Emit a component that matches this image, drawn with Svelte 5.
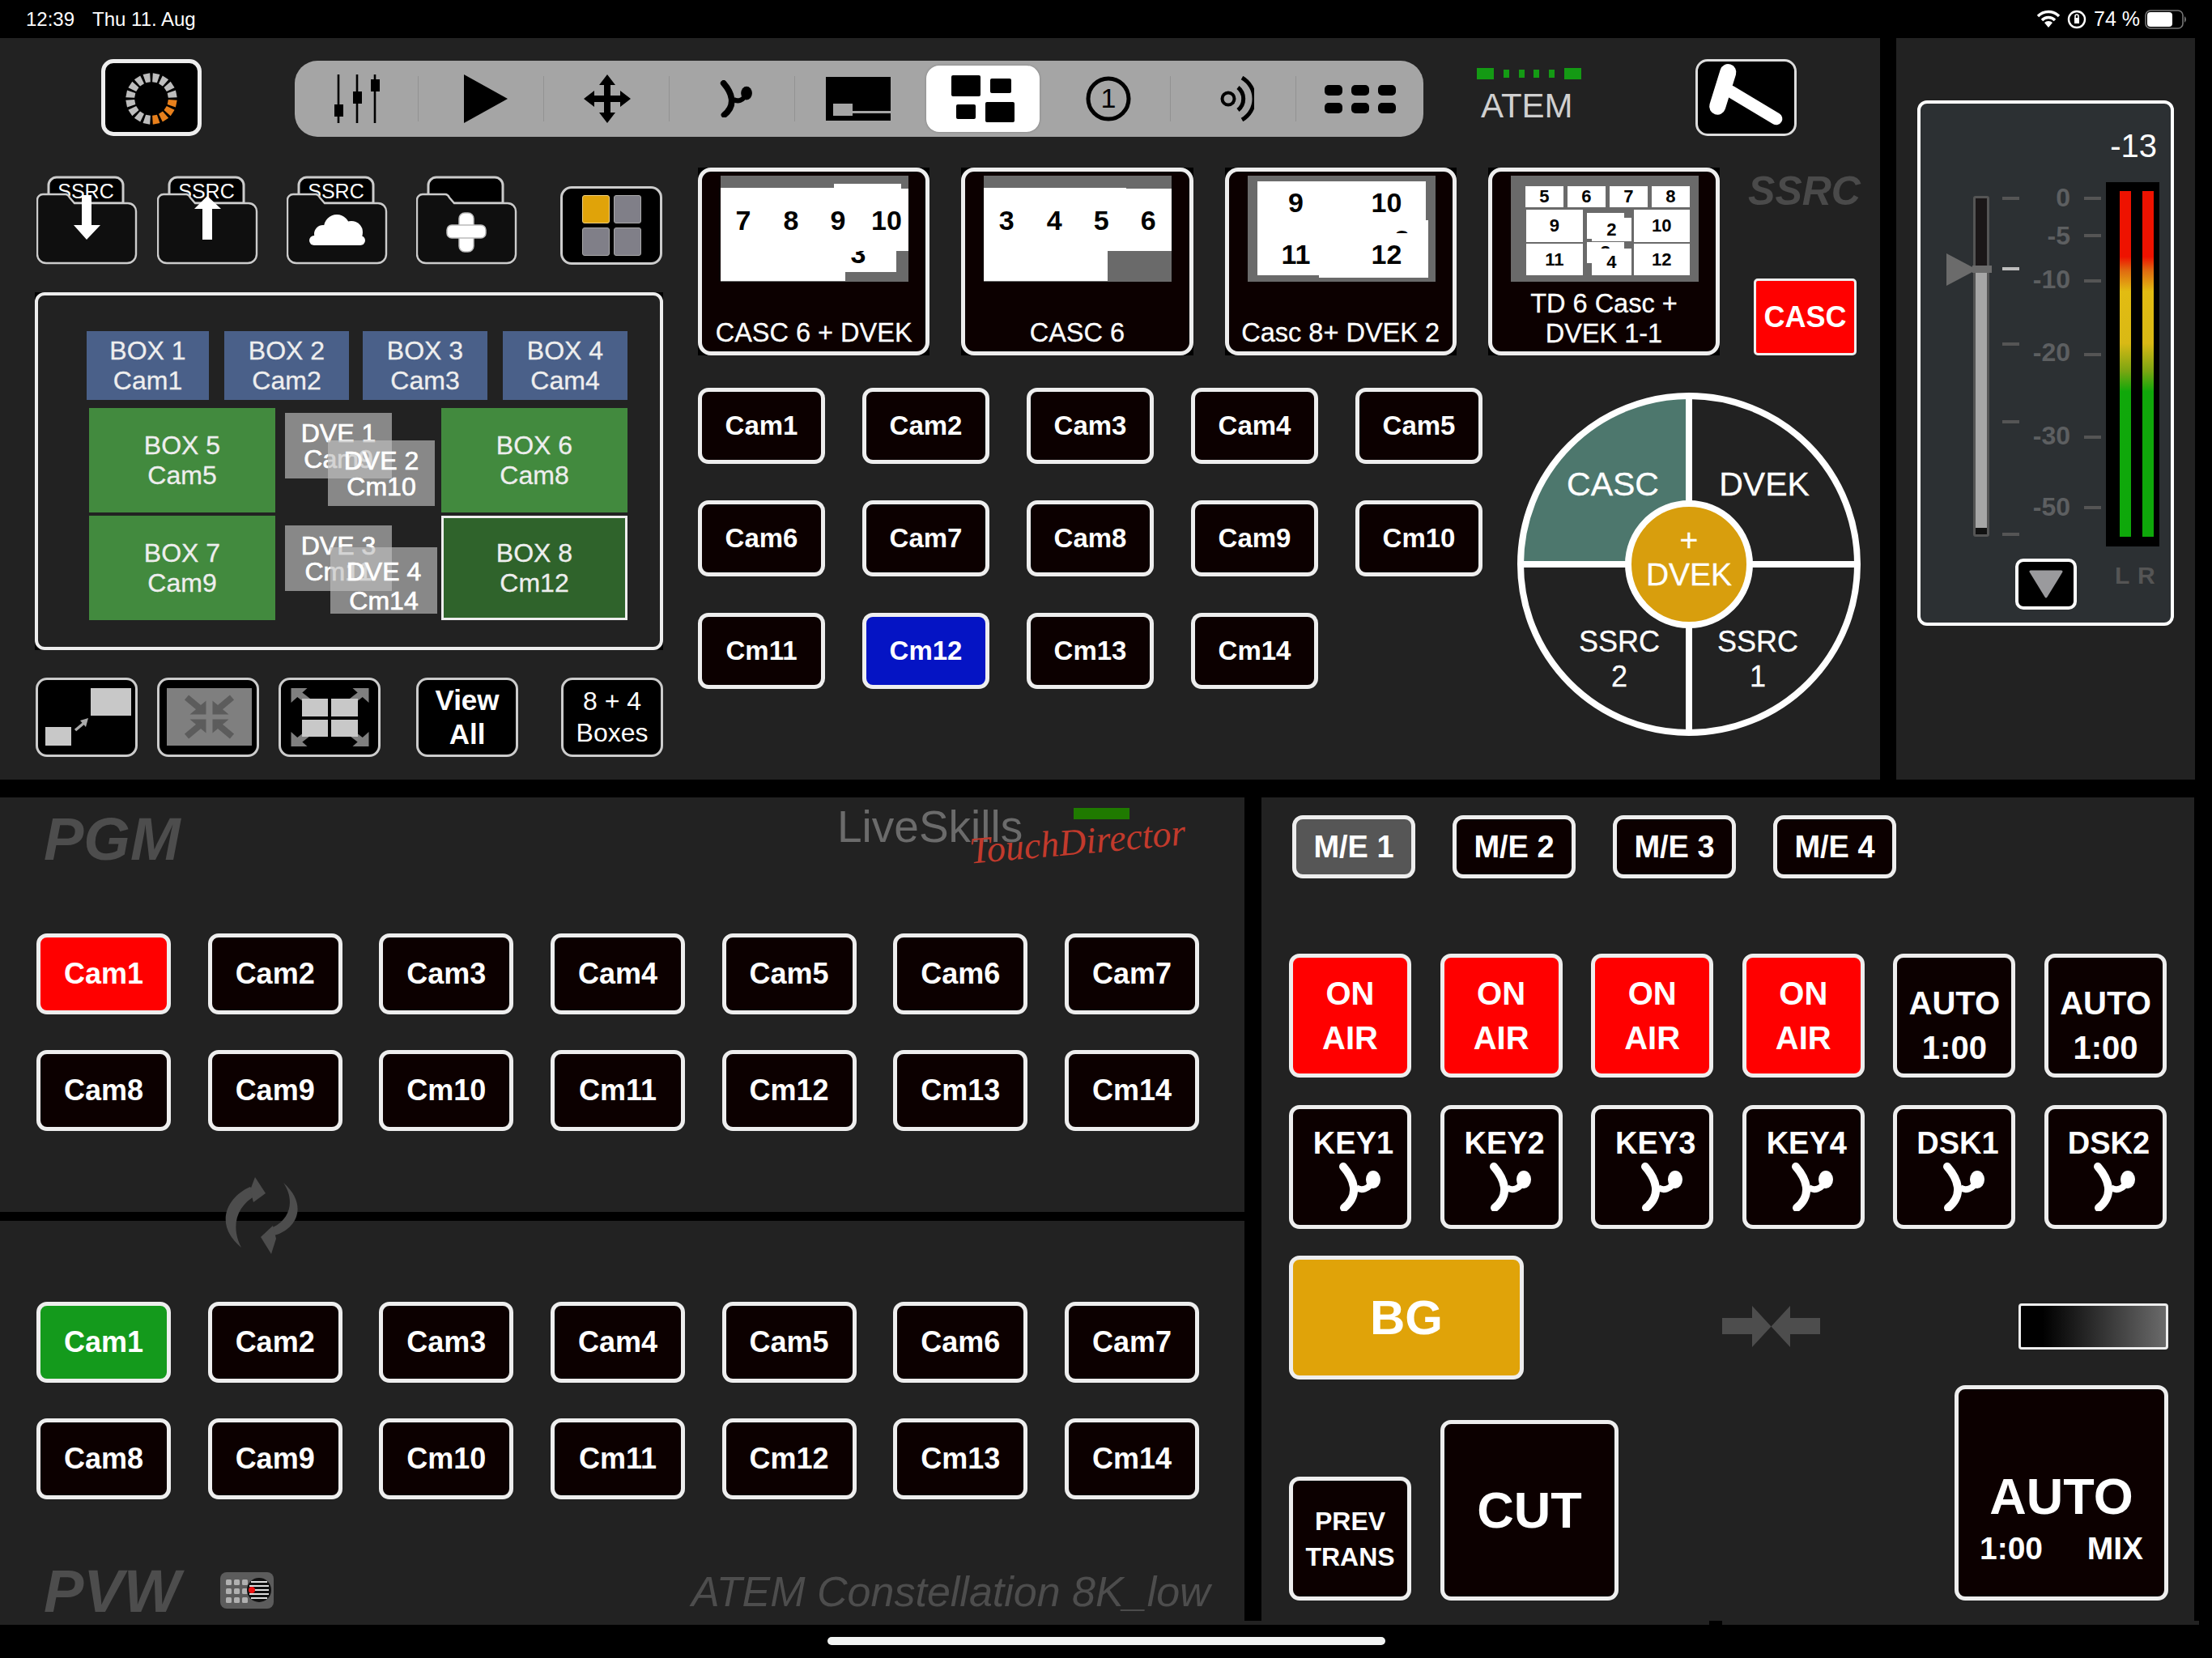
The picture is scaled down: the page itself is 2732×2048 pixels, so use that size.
<script>
  const ring = Array.from({ length: 16 }, (_, i) => 11.25 + i * 22.5);
  const row1 = ['Cam1','Cam2','Cam3','Cam4','Cam5','Cam6','Cam7','Cam8','Cam9','Cm10','Cm11','Cm12','Cm13','Cm14'];
  const rect = (x, y, w, h, t = '', fs = 34) => ({ x, y, w, h, t, fs, white: true });
  const num = (cx, cy, t, fs = 34) => ({ x: cx - 30, y: cy - 30, w: 60, h: 60, t, fs, white: false });
  const thumbs = [
    { label: ['CASC 6 + DVEK'], items: [rect(0,15,154,115), rect(140,10,83,6), rect(154,93,63,26),
      num(170,96,'3',34), rect(154,16,78,77), num(28,55,'7'), num(87,55,'8'), num(145,55,'9'), num(205,55,'10')] },
    { label: ['CASC 6'], items: [rect(0,15,153,115), rect(153,15,23,78), rect(176,16,56,77),
      num(28,55,'3'), num(87,55,'4'), num(145,55,'5'), num(203,55,'6')] },
    { label: ['Casc 8+ DVEK 2'], items: [rect(12,7,208,116), rect(220,55,3,16), num(191,79,'3',34), rect(88,71,135,55),
      num(60,33,'9'), num(172,33,'10'), num(60,97,'11'), num(172,97,'12')] },
    { label: ['TD 6 Casc +','DVEK 1-1'], items: [
      rect(18,13,47,26,'5',22), rect(70,13,47,26,'6',22), rect(122,13,47,26,'7',22), rect(174,13,47,26,'8',22),
      rect(19,42,70,40,'9',22), rect(152,42,69,40,'10',22), rect(19,84,70,39,'11',22), rect(152,84,69,39,'12',22),
      rect(94,46,46,32,'1',22), rect(100,52,49,29,'2',22), rect(94,82,46,26,'3',22), rect(100,90,49,33,'4',22)] }
  ];
  const boxes = [
    { x:107,y:409,w:151,h:85,a:'BOX 1',b:'Cam1',c:'blue' }, { x:277,y:409,w:154,h:85,a:'BOX 2',b:'Cam2',c:'blue' },
    { x:448,y:409,w:154,h:85,a:'BOX 3',b:'Cam3',c:'blue' }, { x:621,y:409,w:154,h:85,a:'BOX 4',b:'Cam4',c:'blue' },
    { x:110,y:504,w:230,h:129,a:'BOX 5',b:'Cam5',c:'green' }, { x:545,y:504,w:230,h:129,a:'BOX 6',b:'Cam8',c:'green' },
    { x:110,y:637,w:230,h:129,a:'BOX 7',b:'Cam9',c:'green' }, { x:545,y:637,w:230,h:129,a:'BOX 8',b:'Cm12',c:'dark' },
    { x:352,y:510,w:132,h:81,a:'DVE 1',b:'Cam9',c:'dve' }, { x:405,y:544,w:132,h:81,a:'DVE 2',b:'Cm10',c:'dve' },
    { x:352,y:649,w:132,h:81,a:'DVE 3',b:'Cm11',c:'dve' }, { x:408,y:676,w:132,h:82,a:'DVE 4',b:'Cm14',c:'dve tall4' }
  ];
  const scale = [['0',244],['-5',291],['-10',345],['-20',435],['-30',538],['-50',626]];
  const rticks = [245,291,347,438,540,627];
  const lticks = [[245,0],[332,1],[425,0],[521,0],[660,0]];
  const corners = [[1,1],[-1,1],[1,-1],[-1,-1]];
  const keys = ['KEY1','KEY2','KEY3','KEY4','DSK1','DSK2'];
  const six = [1,2,3,4,5,6];
</script>

<div class="screen">
  <div class="status">
    <span class="time">12:39</span><span class="date">Thu 11. Aug</span>
    <span class="spring"></span>
    <svg class="wifi" width="32" height="24" viewBox="0 0 32 24">
      <path d="M3 8 A18 18 0 0 1 29 8" fill="none" stroke="#fff" stroke-width="3.4"/>
      <path d="M8 13 A11 11 0 0 1 24 13" fill="none" stroke="#fff" stroke-width="3.4"/>
      <path d="M16 22 L11 16 A7 7 0 0 1 21 16 Z" fill="#fff"/>
    </svg>
    <svg class="lock" width="24" height="24" viewBox="0 0 24 24">
      <circle cx="12" cy="12" r="10" fill="none" stroke="#fff" stroke-width="2.4"/>
      <rect x="9" y="10" width="6" height="7" fill="#fff"/>
      <path d="M10 10 V8 A2 2 0 0 1 14 8 V10" fill="none" stroke="#fff" stroke-width="1.6"/>
    </svg>
    <span class="pct">74 %</span>
    <svg class="batt" width="52" height="24" viewBox="0 0 52 24">
      <rect x="1" y="1" width="46" height="22" rx="6" fill="none" stroke="#777" stroke-width="1.6"/>
      <rect x="3" y="3" width="31" height="18" rx="4" fill="#fff"/>
      <path d="M49 8 A5 5 0 0 1 49 16 Z" fill="#777"/>
    </svg>
  </div>

  <div class="top">
    <section class="control">
      <header class="head">
        <div class="logoBtn">
          <svg width="116" height="88" viewBox="0 0 116 88">
            {#each ring as a}
              <polygon points="53.500,13 62.500,13 61,24 55,24" transform="rotate({a} 58 45)" fill={a >= 100 && a <= 170 ? '#e8801c' : '#bdbdbd'}/>
            {/each}
          </svg>
        </div>
        <nav class="toolbar">
          <div class="cell sep">
            <svg width="60" height="62" viewBox="0 0 60 62">
              <path d="M7 1 V61 M30 1 V61 M52 1 V61" stroke="#000" stroke-width="2.6"/>
              <rect x="2" y="38" width="11" height="15" fill="#000"/>
              <rect x="25" y="22" width="11" height="15" fill="#000"/>
              <rect x="47" y="7" width="11" height="15" fill="#000"/>
            </svg>
          </div>
          <div class="cell sep">
            <svg class="nudgeP" width="54" height="60" viewBox="0 0 54 60"><polygon points="0,0 54,30 0,60" fill="#000"/></svg>
          </div>
          <div class="cell sep">
            <svg width="58" height="60" viewBox="0 0 58 60">
              <path d="M29 0 L39 13 H33 V26 H45 V20 L58 30 L45 40 V34 H33 V47 H39 L29 60 L19 47 H25 V34 H13 V40 L0 30 L13 20 V26 H25 V13 H19 Z" fill="#000"/>
            </svg>
          </div>
          <div class="cell sep">
            <svg class="nudgeR" width="46" height="46" viewBox="0 0 52 60">
              <path d="M6 5 C19 20 27 40 7 56" fill="none" stroke="#000" stroke-width="10" stroke-linecap="round"/>
              <path d="M22 31 C28 35 38 34 42 22" fill="none" stroke="#000" stroke-width="8"/>
              <ellipse cx="43" cy="21" rx="9" ry="11" fill="#000"/>
            </svg>
          </div>
          <div class="cell">
            <svg width="80" height="54" viewBox="0 0 80 54">
              <rect x="0" y="0" width="80" height="54" fill="#000"/>
              <rect x="9" y="33" width="24" height="15" fill="#a5a5a5"/>
              <rect x="33" y="42" width="47" height="3" fill="#a5a5a5"/>
            </svg>
          </div>
          <div class="cell"><div class="selected">
            <svg width="78" height="58" viewBox="0 0 78 58">
              <rect x="0" y="0" width="36" height="26" rx="2" fill="#000"/>
              <rect x="48" y="4" width="26" height="18" rx="2" fill="#000"/>
              <rect x="6" y="36" width="24" height="18" rx="2" fill="#000"/>
              <rect x="42" y="33" width="36" height="25" rx="2" fill="#000"/>
            </svg>
          </div></div>
          <div class="cell sep">
            <svg width="56" height="56" viewBox="0 0 56 56">
              <circle cx="28" cy="28" r="25" fill="none" stroke="#000" stroke-width="5"/>
              <text x="28" y="39" class="one">1</text>
            </svg>
          </div>
          <div class="cell sep">
            <svg class="nudgeR" width="42" height="56" viewBox="0 0 42 56">
              <circle cx="10" cy="28" r="7.500" fill="none" stroke="#000" stroke-width="4"/>
              <path d="M22 14 A18 18 0 0 1 22 42" fill="none" stroke="#000" stroke-width="5"/>
              <path d="M27 2 A30 30 0 0 1 27 54" fill="none" stroke="#000" stroke-width="5"/>
            </svg>
          </div>
          <div class="cell dots">
            {#each six as d}<i data-d={d}></i>{/each}
          </div>
        </nav>
        <div class="atem">
          <div class="leds"><b></b><i></i><i></i><i></i><i></i><b></b></div>
          <div class="atemText">ATEM</div>
        </div>
        <div class="hammer">
          <svg width="119" height="89" viewBox="0 0 118 88">
            <path d="M41 37 L96 70" stroke="#fff" stroke-width="15" stroke-linecap="round"/>
            <path d="M37 13 L24 55" stroke="#fff" stroke-width="20" stroke-linecap="round"/>
          </svg>
        </div>
      </header>

      <div class="main">
        <div class="leftCol">
          <div class="iconRow">
            {#each ['down','up','cloud','plus'] as kind, i}
              <svg class="folder f{i}" width="125" height="110" viewBox="0 0 125 110">
                <path d="M15 34 V12 A10 10 0 0 1 25 2 H97 A10 10 0 0 1 107 12 V34 Z" fill="#000" stroke="#ccc" stroke-width="3"/>
                {#if kind !== 'plus'}<text x="61" y="28" class="ftext">SSRC</text>{/if}
                <path d="M1 30 A7 7 0 0 1 8 23 H36 Q39 23 41 27 L47 34 H113 A10 10 0 0 1 123 44 V97 A11 11 0 0 1 112 108 H12 A11 11 0 0 1 1 97 Z" fill="#0f0f0f" stroke="#ccc" stroke-width="2.400"/>
                {#if kind === 'down'}
                  <path d="M56 24 H68 V61 H79 L62 79 L46 61 H56 Z" fill="#fff"/>
                {:else if kind === 'up'}
                  <path d="M62 25 L79 41 H68 V79 H56 V41 H46 Z" fill="#fff"/>
                {:else if kind === 'cloud'}
                  <g fill="#fff"><circle cx="62" cy="64" r="16"/><circle cx="45" cy="72" r="11"/><circle cx="80" cy="70" r="14"/><rect x="28" y="74" width="69" height="12" rx="6"/><rect x="38" y="64" width="48" height="16"/></g>
                {:else}
                  <g fill="#fff" stroke="#bbb" stroke-width="1.500"><rect x="53" y="46" width="18" height="48" rx="7"/><rect x="38" y="61" width="48" height="16" rx="6"/></g>
                  <rect x="54" y="62" width="16" height="14" fill="#fff"/>
                {/if}
              </svg>
            {/each}
            <div class="gridBtn"><i class="on"></i><i></i><i></i><i></i></div>
          </div>

          <div class="boxWrap"><div class="boxFrame"><div class="boxCanvas">
            {#each boxes as b}
              <div class="box {b.c}" style="left:{b.x-47}px;top:{b.y-365}px;width:{b.w}px;height:{b.h}px"><span>{b.a}</span><span>{b.b}</span></div>
            {/each}
          </div></div></div>

          <div class="toolRow">
            <div class="tool">
              <svg width="125" height="98" viewBox="0 0 125 98">
                <rect x="11" y="61" width="32" height="23" fill="#c8c8c8"/>
                <rect x="67" y="13" width="50" height="34" fill="#c8c8c8"/>
                <path d="M48 65 L60 55" stroke="#aaa" stroke-width="3.500"/><path d="M64 50 L54 53 L61 61 Z" fill="#aaa"/>
              </svg>
            </div>
            <div class="tool">
              <svg width="125" height="98" viewBox="0 0 125 98">
                <rect x="11" y="13" width="105" height="71" fill="#7f7f7f"/>
                {#each corners as [sx, sy]}
                  <g transform="translate(63.500 48.500) scale({sx} {sy})" fill="#5c5c5c">
                    <polygon points="4,3 4,20 24,3"/><path d="M10 9 L28 24" stroke="#5c5c5c" stroke-width="8"/>
                  </g>
                {/each}
              </svg>
            </div>
            <div class="tool">
              <svg width="125" height="98" viewBox="0 0 125 98">
                {#each corners as [sx, sy]}
                  <g transform="translate(62.500 49) scale({sx} {sy})" fill="#7f7f7f">
                    <polygon points="48,36 48,18 28,36"/><path d="M44 33 L22 16" stroke="#7f7f7f" stroke-width="8"/>
                  </g>
                {/each}
                <g fill="#c8c8c8">
                  <rect x="28" y="26" width="32" height="22"/><rect x="64" y="26" width="33" height="22"/>
                  <rect x="28" y="52" width="32" height="21"/><rect x="64" y="52" width="33" height="21"/>
                </g>
              </svg>
            </div>
            <div class="tool big view">View<br/>All</div>
            <div class="tool reg">8 + 4<br/>Boxes</div>
          </div>
        </div>

        <div class="rightArea">
          <div class="thumbRow">
            {#each thumbs as t}
              <div class="thumb"><div class="tface">
                <div class="img">
                  {#each t.items as it}
                    <div class="it" class:white={it.white} style="left:{it.x}px;top:{it.y}px;width:{it.w}px;height:{it.h}px;font-size:{it.fs}px">{it.t}</div>
                  {/each}
                </div>
                <div class="tlabel" class:two={t.label.length > 1}>{#each t.label as l}<div>{l}</div>{/each}</div>
              </div></div>
            {/each}
            <div class="ssrcCol">
              <div class="ssrcLabel">SSRC</div>
              <div class="cascBtn">CASC</div>
            </div>
          </div>
          <div class="lower">
            <div class="camGrid">
              {#each row1 as c}
                <div class="btn" class:blue={c === 'Cm12'}>{c}</div>
              {/each}
            </div>
            <svg class="dial" width="432" height="432" viewBox="0 0 432 432">
              <circle cx="216" cy="216" r="208" fill="#222"/>
              <path d="M216 216 V8 A208 208 0 0 0 8 216 Z" fill="#4d776d"/>
              <circle cx="216" cy="216" r="208" fill="none" stroke="#fff" stroke-width="8"/>
              <path d="M216 8 V424 M8 216 H424" stroke="#fff" stroke-width="8"/>
              <circle cx="216" cy="216" r="75" fill="#d89e0d" stroke="#fff" stroke-width="8"/>
              <text x="122" y="131" class="d41">CASC</text>
              <text x="309" y="131" class="d41">DVEK</text>
              <text x="216" y="199" class="d38">+</text>
              <text x="216" y="242" class="d38">DVEK</text>
              <text x="130" y="324" class="d36">SSRC</text>
              <text x="130" y="367" class="d36">2</text>
              <text x="301" y="324" class="d36">SSRC</text>
              <text x="301" y="367" class="d36">1</text>
            </svg>
          </div>
        </div>
      </div>
    </section>

    <section class="faderPanel">
      <div class="card">
        <div class="val">-13</div>
        {#each lticks as [y, on]}
          <i class="tick l" class:on={on} style="top:{y-130}px"></i>
        {/each}
        {#each rticks as y}
          <i class="tick r" style="top:{y-130}px"></i>
        {/each}
        {#each scale as [t, y]}
          <span class="sc" style="top:{y-128}px">{t}</span>
        {/each}
        <div class="track"><div class="dark"></div><div class="lite"></div></div>
        <svg class="knob" width="58" height="40" viewBox="0 0 58 40">
          <polygon points="0,0 34,18 34,22 0,40" fill="#6b6b6b"/>
          <rect x="32" y="15" width="24" height="9" fill="#6b6b6b"/>
        </svg>
        <div class="meter"><div class="bar"></div><div class="bar"></div></div>
        <div class="lr">L R</div>
        <div class="downBtn">
          <svg width="44" height="36" viewBox="0 0 44 36"><polygon points="3,2 41,2 22,33" fill="#9a9a9d" stroke="#9a9a9d" stroke-width="3" stroke-linejoin="round"/></svg>
        </div>
      </div>
    </section>
  </div>

  <div class="bottom">
    <div class="leftStack">
      <section class="pgm">
        <div class="pHead">
          <div class="bigLabel">PGM</div>
          <div class="live">LiveSkills</div>
          <div class="greenBar"></div>
          <div class="touch">TouchDirector</div>
        </div>
        <div class="camRows">
          {#each row1 as c, i}<div class="btn w" class:red={i === 0}>{c}</div>{/each}
        </div>
      </section>
      <section class="pvw">
        <div class="camRows">
          {#each row1 as c, i}<div class="btn w" class:grn={i === 0}>{c}</div>{/each}
        </div>
        <div class="pFoot">
          <div class="bigLabel pv">PVW</div>
          <svg class="padIcon" width="66" height="45" viewBox="0 0 66 45">
            <rect width="66" height="45" rx="8" fill="#5c5c5c"/>
            <g fill="#b0b0b0">
              {#each [7,17,27] as x}{#each [9,20,31] as y}<rect x={x} y={y} width="7" height="7" rx="1.500"/>{/each}{/each}
            </g>
            <circle cx="48" cy="22" r="15" fill="#111"/>
            <path d="M38 12 H58 M36 17 H60 M36 22 H60 M36 27 H60 M38 32 H58" stroke="#ddd" stroke-width="2"/>
            <circle cx="39" cy="22" r="4" fill="#e11"/>
          </svg>
          <div class="constel">ATEM Constellation 8K_low</div>
        </div>
      </section>
      <svg class="recycle" width="94" height="96" viewBox="0 0 94 96">
        <g fill="#4d4d4d">
          <path d="M32 12 C4 24 -14 58 21 87 C8 62 14 36 40 22 Z"/>
          <polygon points="38,0 51,20 36,31 32,16"/>
          <path d="M73 7 C86 26 84 50 60 62 L62 72 C90 64 104 34 73 7 Z"/>
          <polygon points="58,95 45,74 60,60 64,76"/>
        </g>
      </svg>
    </div>

    <section class="mix">
      <div class="meRow">
        <div class="btn me active">M/E 1</div><div class="btn me">M/E 2</div><div class="btn me">M/E 3</div><div class="btn me">M/E 4</div>
      </div>
      <div class="keyGrid">
        {#each [1,2,3,4] as _}<div class="btn tall red"><span>ON</span><span>AIR</span></div>{/each}
        {#each [1,2] as _}<div class="btn tall auto"><span>AUTO</span><span>1:00</span></div>{/each}
        {#each keys as k}
          <div class="btn key">
            <span class="klabel">{k}</span>
            <svg class="kicon" width="52" height="60" viewBox="0 0 52 60">
              <path d="M6 5 C19 20 27 40 7 56" fill="none" stroke="#fff" stroke-width="10" stroke-linecap="round"/>
              <path d="M22 31 C28 35 38 34 42 22" fill="none" stroke="#fff" stroke-width="8"/>
              <ellipse cx="43" cy="21" rx="9" ry="11" fill="#fff"/>
            </svg>
          </div>
        {/each}
      </div>
      <div class="trans">
        <div class="tLeft">
          <div class="btn bg">BG</div>
          <div class="tBtns">
            <div class="btn prev"><span>PREV</span><span>TRANS</span></div>
            <div class="btn cut">CUT</div>
          </div>
        </div>
        <svg class="pinch" width="121" height="51" viewBox="0 0 121 51">
          <path d="M0 15 H37 V0 L60.500 25.500 L37 51 V35 H0 Z" fill="#4d4d4d"/>
          <path d="M121 15 H84 V0 L60.500 25.500 L84 51 V35 H121 Z" fill="#4d4d4d"/>
        </svg>
        <div class="tRight">
          <div class="grad"></div>
          <div class="btn autoBig">
            <span class="autoT">AUTO</span>
            <div class="autoS"><span>1:00</span><span>MIX</span></div>
          </div>
        </div>
      </div>
    </section>
  </div>

  <div class="strip"><div class="notch"></div></div>
  <div class="homeWrap"><div class="home"></div></div>
</div>

<style>
  :global(body) { margin: 0; background: #000; }
  .screen { width: 2732px; height: 2048px; background: #000; overflow: hidden; position: relative; font-family: "Liberation Sans", Arial, sans-serif; color: #fff; box-sizing: border-box; }
  * { box-sizing: border-box; }

  .status { height: 47px; display: flex; align-items: center; padding: 0 31px 0 32px; font-size: 24px; color: #fff; }
  .date { margin-left: 22px; }
  .spring { flex: 1; }
  .wifi { margin-right: 7px; }
  .lock { margin-right: 9px; }
  .pct { margin-right: 6px; font-size: 25px; }

  .top { display: flex; height: 916px; gap: 20px; }
  .control { width: 2322px; background: #222; }
  .head { display: flex; align-items: flex-start; padding: 26px 0 0 125px; height: 160px; }
  .logoBtn, .hammer { width: 124px; height: 95px; background: #000; border: 5px solid #eee; border-radius: 15px; display: flex; align-items: center; justify-content: center; }
  .hammer { margin-left: 141px; width: 125px; border-width: 3px; border-color: #ddd; }
  .toolbar { margin: 2px 0 0 115px; width: 1394px; height: 94px; border-radius: 28px; background: #a5a5a5; display: grid; grid-template-columns: 153px 155px 155px 155px 155px 154px 155px 155px 157px; }
  .cell { position: relative; display: flex; align-items: center; justify-content: center; height: 94px; }
  .cell.sep::after { content: ""; position: absolute; right: 0; top: 19px; height: 56px; width: 1px; background: #929292; }
  .nudgeR { margin-left: 9px; }
  .nudgeP { margin-left: 11px; }
  .selected { width: 140px; height: 82px; border-radius: 16px; background: #fff; display: flex; align-items: center; justify-content: center; box-shadow: 0 0 3px rgba(0,0,0,.25); }
  .one { font-size: 34px; font-family: "Liberation Sans", sans-serif; text-anchor: middle; fill: #000; }
  .cell.dots { display: grid; grid-template-columns: repeat(3, 22px); grid-template-rows: repeat(2, 13px); gap: 9px 11px; align-content: center; justify-content: center; }
  .dots i { background: #000; border-radius: 5px; display: block; width: 22px; height: 13px; }
  .atem { margin-left: 66px; width: 129px; }
  .leds { display: flex; align-items: center; justify-content: space-between; margin-top: 11px; height: 14px; }
  .leds b { width: 21px; height: 14px; background: #149a14; }
  .leds i { width: 7px; height: 10px; background: #149a14; }
  .atemText { font-size: 42px; color: #d0d0d0; margin: 13px 0 0 5px; line-height: 40px; }

  .main { display: flex; padding: 0 0 0 43px; }
  .leftCol { width: 776px; padding-top: 10px; }
  .iconRow { display: flex; align-items: flex-end; height: 110px; margin-left: 2px; }
  .folder { display: block; }
  .f1 { margin-left: 24px; }
  .f2 { margin-left: 35px; }
  .f3 { margin-left: 35px; }
  .gridBtn { width: 126px; height: 97px; margin-left: 53px; background: #000; border: 3px solid #ccc; border-radius: 14px; display: grid; grid-template-columns: 34px 34px; grid-template-rows: 35px 35px; gap: 5px; justify-content: center; align-content: center; }
  .gridBtn i { background: #807f88; border: 1px solid #aaa; border-radius: 3px; }
  .gridBtn i.on { background: #e0a309; border-color: #f0d080; }
  .ftext { font-size: 25px; fill: #fff; text-anchor: middle; font-family: "Liberation Sans", sans-serif; }

  .boxWrap { margin-top: 34px; height: 442px; background: #000; }
  .boxFrame { height: 100%; border: 4px solid #eee; border-radius: 12px; background: #222; }
  .boxCanvas { position: relative; height: 100%; }
  .box { position: absolute; display: flex; flex-direction: column; align-items: center; justify-content: center; font-size: 32px; line-height: 37px; color: #eee; -webkit-text-stroke: 0.3px #eee; }
  .box.blue { background: #4a6089; }
  .box.green { background: #428a3e; }
  .box.dark { background: #2f632b; border: 3px solid #eee; }
  .box.dve { background: rgba(190,190,190,.66); color: #fff; line-height: 32px; -webkit-text-stroke: 0.7px #fff; }
  .box.tall4 { line-height: 36px; padding-top: 14px; }

  .toolRow { display: flex; margin: 34px 0 0 1px; gap: 24px; }
  .tool { width: 126px; height: 98px; background: #000; border: 3px solid #ccc; border-radius: 14px; display: flex; align-items: center; justify-content: center; text-align: center; }
  .tool svg { margin: -3px; flex: none; }
  .tool.view { margin-left: 20px; font-weight: 700; font-size: 35px; line-height: 42px; }
  .tool.reg { margin-left: 29px; font-size: 32px; line-height: 39px; }

  .rightArea { margin-left: 43px; width: 1436px; }
  .thumbRow { display: flex; gap: 39px; }
  .thumb { width: 287px; height: 232px; background: #000; }
  .tface { position: relative; height: 100%; background: #0c0000; border: 5px solid #eee; border-radius: 16px; }
  .img { position: absolute; left: 23px; top: 5px; width: 232px; height: 131px; background: #6a6a6a; overflow: hidden; }
  .it { position: absolute; display: flex; align-items: center; justify-content: center; font-weight: 700; color: #000; font-size: 34px; }
  .it.white { background: #fff; }
  .tlabel { position: absolute; left: -5px; right: -5px; bottom: 4px; text-align: center; font-size: 32.500px; line-height: 37px; color: #fff; white-space: nowrap; -webkit-text-stroke: 0.3px #fff; }
  .tlabel.two { bottom: 3px; }
  .ssrcCol { margin-left: -4px; width: 139px; display: flex; flex-direction: column; align-items: flex-end; }
  .ssrcLabel { font-weight: 700; font-style: italic; font-size: 50px; line-height: 48px; color: #4a4a4a; margin-top: 5px; }
  .cascBtn { margin-top: 84px; margin-right: 5px; width: 127px; height: 95px; background: #f00; border: 3px solid #eee; border-radius: 5px; display: flex; align-items: center; justify-content: center; font-weight: 700; font-size: 36px; }

  .lower { display: flex; margin-top: 40px; position: relative; align-items: flex-start; }
  .camGrid { display: grid; grid-template-columns: repeat(5, 157px); grid-auto-rows: 94px; column-gap: 46px; row-gap: 45px; }
  .btn { background: #0c0000; border: 5px solid #eee; border-radius: 13px; display: flex; align-items: center; justify-content: center; color: #fff; font-weight: 700; font-size: 33px; text-align: center; }
  .btn.blue { background: #0514c4; }
  .btn.red { background: #f00; }
  .btn.grn { background: #149a1c; }
  .dial { margin: 2px 0 0 39px; flex: none; }
  .d41 { font-size: 41px; fill: #fff; text-anchor: middle; font-family: "Liberation Sans", sans-serif; stroke: #fff; stroke-width: .3px; }
  .d38 { font-size: 39px; fill: #fff; text-anchor: middle; font-family: "Liberation Sans", sans-serif; stroke: #fff; stroke-width: .3px; }
  .d36 { font-size: 36px; fill: #fff; text-anchor: middle; font-family: "Liberation Sans", sans-serif; stroke: #fff; stroke-width: .3px; }

  .faderPanel { width: 369px; background: #222; padding: 77px 0 0 26px; }
  .card { position: relative; width: 317px; height: 649px; background: #2c3033; border: 4px solid #fff; border-radius: 12px; }
  .val { position: absolute; right: 17px; top: 30px; font-size: 40px; line-height: 44px; }
  .tick { position: absolute; height: 4px; width: 21px; background: #555; }
  .tick.l { left: 101px; }
  .tick.l.on { background: #bdbdbd; }
  .tick.r { left: 202px; }
  .sc { position: absolute; right: 124px; transform: translateY(-50%); font-weight: 700; font-size: 32px; line-height: 36px; color: #5d5f61; }
  .track { position: absolute; left: 65px; top: 114px; width: 20px; height: 421px; border: 3px solid #555; border-radius: 3px; background: #111; overflow: hidden; }
  .dark { height: 87px; background: #1b1718; }
  .lite { height: 320px; background: #a6a6a6; }
  .knob { position: absolute; left: 32px; top: 185px; }
  .meter { position: absolute; left: 229px; top: 97px; width: 66px; height: 450px; background: #000; display: flex; gap: 14px; padding: 11px 0 12px 17px; }
  .bar { width: 14px; background: linear-gradient(#ee1200 0, #ee1200 19%, #e06a10 23%, #e2bc12 29%, #d9b915 44%, #7ca512 52%, #10a80a 58%, #0ea80a 100%); }
  .lr { position: absolute; left: 240px; top: 566px; font-weight: 700; font-size: 30px; line-height: 34px; color: #555; word-spacing: 2px; }
  .downBtn { position: absolute; left: 117px; top: 562px; width: 76px; height: 63px; background: #000; border: 4px solid #fff; border-radius: 10px; display: flex; align-items: center; justify-content: center; }

  .bottom { display: flex; margin-top: 22px; height: 1017px; gap: 21px; }
  .leftStack { position: relative; width: 1537px; display: flex; flex-direction: column; gap: 11px; }
  .pgm { height: 512px; background: #222; padding-left: 45px; }
  .pvw { height: 494px; background: #222; padding: 100px 0 0 45px; }
  .pHead { position: relative; height: 168px; }
  .bigLabel { font-size: 74px; line-height: 72px; font-weight: 700; font-style: italic; color: #4d4d4d; position: relative; left: 9px; top: 16px; width: 200px; }
  .live { position: absolute; left: 989px; top: 9px; font-size: 55px; line-height: 54px; color: #6b6b6b; }
  .greenBar { position: absolute; left: 1281px; top: 13px; width: 69px; height: 14px; background: #1f7a00; }
  .touch { position: absolute; left: 1152px; top: 30px; font-family: "Liberation Serif", serif; font-style: italic; font-size: 46px; line-height: 50px; color: #c23a2c; transform: rotate(-5deg); }
  .camRows { display: grid; grid-template-columns: repeat(7, 166px); grid-auto-rows: 100px; column-gap: 45.67px; row-gap: 44px; }
  .btn.w { font-size: 36px; }
  .pFoot { display: flex; align-items: flex-start; margin-top: 86px; position: relative; }
  .pv { top: -8px; width: 227px; }
  .padIcon { margin-top: 4px; }
  .constel { margin: 2px 0 0 516px; font-size: 52px; line-height: 52px; font-style: italic; color: #4d4d4d; white-space: nowrap; }
  .recycle { position: absolute; left: 277px; top: 469px; }

  .mix { width: 1152px; background: #222; padding: 22px 0 0 34px; }
  .meRow { display: flex; gap: 46px; margin-left: 4px; }
  .btn.me { width: 152px; height: 78px; font-size: 38px; }
  .btn.me.active { background: #565656; }
  .keyGrid { display: grid; grid-template-columns: repeat(6, 151px); grid-auto-rows: 153px; column-gap: 35.600px; row-gap: 34px; margin-top: 93px; }
  .btn.tall { flex-direction: column; gap: 13px; font-size: 40px; line-height: 42px; }
  .btn.tall.auto { padding-top: 24px; }
  .btn.key { flex-direction: column; gap: 2px; font-size: 38px; line-height: 44px; padding-top: 3px; }
  .klabel { margin-left: 8px; }
  .kicon { margin-left: 22px; }
  .trans { display: flex; margin-top: 33px; align-items: flex-start; }
  .tLeft { width: 407px; }
  .btn.bg { width: 290px; height: 153px; background: #e0a309; font-size: 60px; }
  .tBtns { display: flex; align-items: flex-end; gap: 36px; height: 223px; margin-top: 50px; }
  .btn.prev { width: 151px; height: 153px; flex-direction: column; font-size: 32px; line-height: 44px; }
  .btn.cut { width: 220px; height: 223px; font-size: 63px; padding-bottom: 2px; }
  .pinch { margin: 62px 0 0 128px; }
  .tRight { margin-left: 166px; width: 264px; display: flex; flex-direction: column; align-items: flex-end; }
  .grad { margin-top: 59px; width: 185px; height: 57px; border: 3px solid #eee; border-radius: 4px; background: linear-gradient(90deg, #000 15%, #6a6a6a 100%); }
  .btn.autoBig { margin-top: 44px; width: 264px; height: 266px; flex-direction: column; justify-content: flex-start; padding-top: 96px; }
  .autoT { font-size: 63px; line-height: 72px; }
  .autoS { display: flex; justify-content: space-between; width: 202px; margin-top: 7px; font-size: 39px; line-height: 44px; }

  .strip { position: relative; width: 2716px; height: 5px; background: #222; }
  .notch { position: absolute; left: 2111px; top: 0; width: 16px; height: 5px; background: #000; }
  .homeWrap { display: flex; justify-content: flex-start; padding: 15px 0 0 1022px; }
  .home { width: 689px; height: 10px; border-radius: 5px; background: #f2f4f3; }
</style>
